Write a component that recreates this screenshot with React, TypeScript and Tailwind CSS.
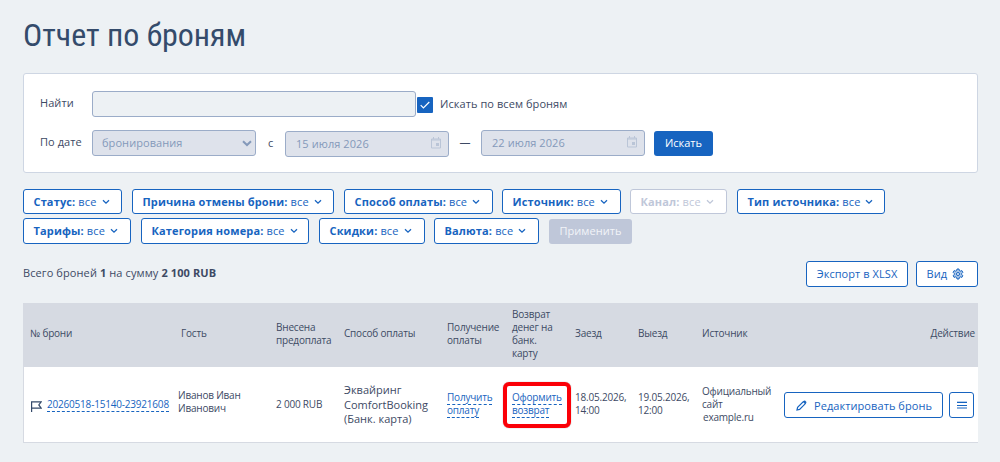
import type { ReactNode } from "react";
import clsx from "clsx";

interface FilterProps {
  label: string;
  className: string;
  disabled?: boolean;
}

const topFilters: FilterProps[] = [
  { label: "Статус", className: "w-[99px] mr-[10px]" },
  { label: "Причина отмены брони", className: "w-[202px] mr-[10px]" },
  { label: "Способ оплаты", className: "w-[149px] mr-[9px]" },
  { label: "Источник", className: "w-[119px] mr-[9px]" },
  { label: "Канал", className: "w-[97px] mr-[10px]", disabled: true },
  { label: "Тип источника", className: "w-[148px]" },
];

const bottomFilters: FilterProps[] = [
  { label: "Тарифы", className: "w-[108px] mr-[10px]" },
  { label: "Категория номера", className: "w-[168px] mr-[10px]" },
  { label: "Скидки", className: "w-[106px] mr-[9px]" },
  { label: "Валюта", className: "w-[105px] mr-[10px]" },
];

const Chevron = () => (
  <svg width="8" height="6" viewBox="0 0 8 6" fill="none" stroke="currentColor" strokeWidth="1.3" className="ml-[5px] shrink-0">
    <path d="M1 1.2 4 4.2 7 1.2" />
  </svg>
);

const Filter = ({ label, className, disabled }: FilterProps) => (
  <button
    className={clsx(
      "flex h-full items-center whitespace-nowrap rounded-[3px] border bg-white pl-[9.5px] tracking-[0.14px]",
      disabled ? "border-[#bfc7d9] text-[#bfc7d9]" : "border-[#1764c0] text-[#1764c0]",
      className,
    )}
  >
    <span>
      <b>{label}:</b> все
    </span>
    <Chevron />
  </button>
);

const DateField = ({ value, className }: { value: string; className: string }) => (
  <div
    className={clsx(
      "flex h-[26px] w-[164px] items-center justify-between rounded-[3px] border border-[#9bacc8] bg-[#dee2eb] pl-[10px] pr-[7px] text-[#8499ba]",
      className,
    )}
  >
    <span>{value}</span>
    <svg width="10" height="12" viewBox="0 0 10 12" fill="none" stroke="#bac5d7" className="mb-[2px]">
      <path d="M.5 2h9v9h-9zM.5 3h9M2.5 0v2M7.5 0v2" />
      <path d="M5 6h3v3H5z" fill="#bac5d7" stroke="none" />
    </svg>
  </div>
);

const DashedLink = ({ children }: { children: ReactNode }) => (
  <a className="border-b border-dashed border-[#1764c0] text-[#1764c0]">{children}</a>
);

const SearchPanel = () => (
  <section className="mt-[18px] h-[100px] rounded-[3px] border border-[#ced6e3] bg-white pl-4 pt-[17px]">
    <div className="flex h-[26px] items-center">
      <label className="w-[52px] pb-[3px]">Найти</label>
      <div className="h-[26px] w-[324px] rounded-[3px] border border-[#9bacc8] bg-[#edf1f4]" />
      <span className="ml-px mt-px flex size-4 items-center justify-center rounded-[1px] bg-[#1764c0]">
        <svg width="10" height="8" viewBox="0 0 10 8" fill="none" stroke="#fff" strokeWidth="1.2">
          <path d="M.7 4.2 3.4 7 9.3 1" />
        </svg>
      </span>
      <span className="ml-[7px]">Искать по всем броням</span>
    </div>
    <div className="mt-[13px] flex h-[27px] items-start">
      <label className="w-[52px] pt-[4px]">По дате</label>
      <div className="flex h-[26px] w-[164px] items-center justify-between rounded-[3px] border border-[#9bacc8] bg-[#dee2eb] pl-[9px] pr-[3px] text-[#8499ba]">
        <span>бронирования</span>
        <svg width="10" height="7" viewBox="0 0 10 7" fill="none" stroke="#8499ba" strokeWidth="2">
          <path d="M1 1.2 5 5 9 1.2" />
        </svg>
      </div>
      <span className="w-[29px] pl-3 pt-[5px]">с</span>
      <DateField value="15 июля 2026" className="mt-px" />
      <span className="w-8 pt-[4px] text-center">—</span>
      <DateField value="22 июля 2026" className="" />
      <button className="ml-[9px] mt-px h-[25px] w-[59px] rounded-[3px] bg-[#1764c0] pb-px font-medium tracking-normal text-white">Искать</button>
    </div>
  </section>
);

const BookingsTable = () => (
  <table className="mt-4 w-[955px] table-fixed border-collapse text-left text-[10px] leading-[13px] tracking-[-0.2px]">
    <colgroup>
      <col className="w-[149px]" />
      <col className="w-[98px]" />
      <col className="w-[68px]" />
      <col className="w-[103px]" />
      <col className="w-[65px]" />
      <col className="w-[63px]" />
      <col className="w-[63px]" />
      <col className="w-[64px]" />
      <col className="w-[82px]" />
      <col />
    </colgroup>
    <thead>
      <tr className="h-16 bg-[#d6dae2] [&>th]:p-0 [&>th]:pb-[3px] [&>th]:pl-[6px] [&>th]:font-normal">
        <th><span className="pl-px">№ брони</span></th>
        <th><span className="pl-[3px]">Гость</span></th>
        <th>Внесена<br />предоплата</th>
        <th>Способ оплаты</th>
        <th>Получение<br />оплаты</th>
        <th>Возврат<br />денег на<br />банк.<br />карту</th>
        <th>Заезд</th>
        <th>Выезд</th>
        <th>Источник</th>
        <th className="text-right"><span className="pr-[3px]">Действие</span></th>
      </tr>
    </thead>
    <tbody>
      <tr className="h-[76px] bg-white shadow-[inset_1px_-1px_0_#d6dae2] [&>td]:p-0 [&>td]:pl-[6px]">
        <td>
          <div className="flex items-center pl-[2px]">
            <svg width="11" height="11" viewBox="0 0 11 11" fill="none" stroke="#34496a" strokeWidth="1.2" className="mr-[5px] mt-[2px] shrink-0">
              <path d="M.6 11V.8h9.6L7.8 3.9l2.4 3.3H.6" />
            </svg>
            <DashedLink>20260518-15140-23921608</DashedLink>
          </div>
        </td>
        <td><div className="pb-[7px]">Иванов Иван<br />Иванович</div></td>
        <td><div className="pb-[2px]">2 000 RUB</div></td>
        <td><div className="text-[11px] leading-[14.5px] tracking-normal">Эквайринг<br />ComfortBooking<br />(Банк. карта)</div></td>
        <td><div className="pb-[2px]"><DashedLink>Получить<br />оплату</DashedLink></div></td>
        <td>
          <div className="relative pb-[2px]">
            <DashedLink>Оформить<br />возврат</DashedLink>
            <span className="absolute -left-[9px] -top-[9px] h-[46px] w-[68px] rounded-[6px] border-4 border-[#fb0007] shadow-[0_0_1px_#777]" />
          </div>
        </td>
        <td><div className="pb-[2px]">18.05.2026,<br />14:00</div></td>
        <td><div className="pb-[2px]">19.05.2026,<br />12:00</div></td>
        <td><div className="pb-[2px]">Официальный<br />сайт<br /><span className="pl-px font-medium">example.ru</span></div></td>
        <td>
          <div className="flex justify-end pr-1 text-[11px] tracking-[0.07px] text-[#1764c0]">
            <button className="flex h-[26px] w-[159px] items-center whitespace-nowrap rounded-[3px] border border-[#1764c0] pl-[11px]">
              <svg width="11" height="11" viewBox="0 0 11 11" fill="none" stroke="currentColor" strokeWidth="1.2" className="mr-[7px]">
                <path d="M1 10 1.6 7.4 7.4 1.6 9.4 3.6 3.6 9.4Z" />
                <path d="M8.2.9 10.1 2.8" strokeWidth="1.6" />
              </svg>
              Редактировать бронь
            </button>
            <button className="ml-[6px] flex h-[26px] w-[25px] items-center justify-center rounded-[3px] border border-[#1764c0]">
              <svg width="10" height="8" viewBox="0 0 10 8">
                <path d="M0 0h10v1H0z" fill="#b8d0ec" />
                <path d="M0 1h10v1H0zM0 4h10v1H0z" fill="#1764c0" />
                <path d="M0 6h10v2H0z" fill="#8bb1df" />
              </svg>
            </button>
          </div>
        </td>
      </tr>
    </tbody>
  </table>
);

const App = () => {
  return (
    <main className="h-[462px] w-[1000px] overflow-hidden bg-[#edf1f4] pl-[23px] pr-[22px] pt-[15px] font-['Open_Sans',sans-serif] text-[11px] leading-[16px] tracking-[0.07px] text-[#3d4a64]">
      <h1 className="h-10 whitespace-nowrap font-['Roboto_Condensed',Roboto,sans-serif] text-[32px] leading-10 tracking-normal text-[#344b6b]">
        Отчет по броням
      </h1>
      <SearchPanel />
      <div className="mt-4 flex h-[25px]">
        {topFilters.map((filter) => (
          <Filter key={filter.label} {...filter} />
        ))}
      </div>
      <div className="mt-1 flex h-[26px]">
        {bottomFilters.map((filter) => (
          <Filter key={filter.label} {...filter} />
        ))}
        <button className="mt-px h-[25px] w-[83px] rounded-[3px] bg-[#bfc7d9] pb-px font-medium text-[#f2f4f8]">Применить</button>
      </div>
      <div className="mt-[17px] flex h-[26px] items-center">
        <p className="mr-auto pb-[2px] tracking-[0.1px]">
          Всего броней <b>1</b> на сумму <b>2 100 RUB</b>
        </p>
        <button className="h-[26px] w-[102px] rounded-[3px] border border-[#1764c0] bg-white text-[#1764c0]">Экспорт в XLSX</button>
        <button className="ml-2 flex h-[26px] w-[62px] items-center rounded-[3px] border border-[#1764c0] bg-white pl-[9.5px] text-[#1764c0]">
          Вид
          <svg width="12" height="12" viewBox="0 0 24 24" fill="#a9c5e7" stroke="currentColor" strokeWidth="2" className="ml-[5px]">
            <path d="m10 2-.6 3-2.2 1.2-2.9-1-2 3.5L4.6 11v2.3l-2.3 2 2 3.5 2.900-1 2.200 1.200.6 3h4l.6-3 2.200-1.200 2.900 1 2-3.500-2.300-2V11l2.300-2.300-2-3.500-2.900 1L14.600 5 14 2z" />
            <circle cx="12" cy="12" r="3" fill="#fff" />
          </svg>
        </button>
      </div>
      <BookingsTable />
    </main>
  );
};

export default App;
